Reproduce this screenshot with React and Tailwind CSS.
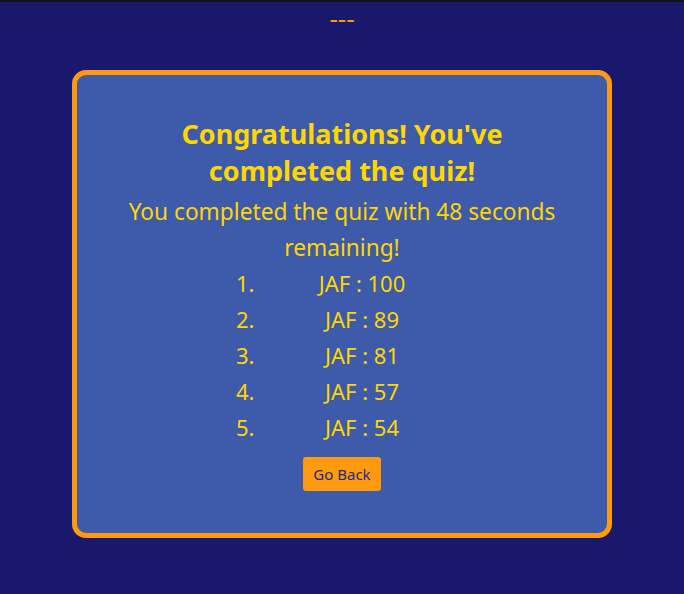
import React from "react";

const scores = [
  { name: "JAF", score: 100 },
  { name: "JAF", score: 89 },
  { name: "JAF", score: 81 },
  { name: "JAF", score: 57 },
  { name: "JAF", score: 54 },
];

const App = () => {
  return (
    <div
      className="min-h-[594px] w-full bg-[#19186c] border-t-2 border-[#111111] flex flex-col items-center"
      style={{ fontFamily: '"Noto Sans", "Open Sans", sans-serif' }}
    >
      {/* Timer placeholder */}
      <div className="h-[32px] text-[26px] leading-[32px] text-[#ff9a10]">---</div>

      {/* Result card */}
      <div className="mt-[36px] w-[540px] border-[5px] border-[#ff9a10] rounded-[14px] bg-[#3d5aab] px-10 pt-10 pb-[42px] flex flex-col items-center text-[#ffd700]">
        <h2 className="w-[360px] text-center text-[27px] leading-[37px] font-bold">
          Congratulations! You've completed the quiz!
        </h2>
        <p className="mt-[5px] text-center text-[22.7px] leading-[36px]">
          You completed the quiz with 48 seconds remaining!
        </p>

        {/* High scores */}
        <div className="flex flex-col -mt-[1px]">
          {scores.map((s, i) => (
            <div key={i} className="flex text-[22px] leading-[36px]">
              <div className="w-[40px] text-left">{i + 1}.</div>
              <div className="w-[172px] text-center">
                {s.name}&nbsp;: {s.score}
              </div>
            </div>
          ))}
        </div>

        <button
          type="button"
          className="mt-[12px] h-[34px] px-[10px] rounded-[3px] bg-[#ff9a10] text-[#1f2a80] text-[15px]"
        >
          Go Back
        </button>
      </div>
    </div>
  );
};

export default App;
